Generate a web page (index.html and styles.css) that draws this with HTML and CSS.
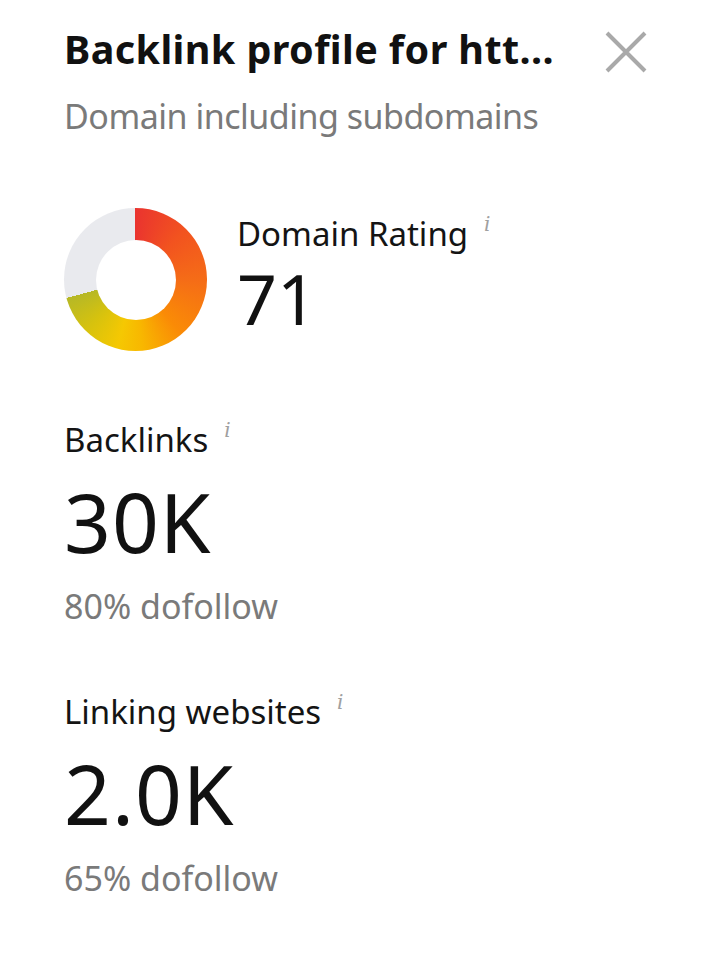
FILE: index.html
```html
<!DOCTYPE html>
<html lang="en">
<head>
<meta charset="utf-8">
<title>Backlink profile</title>
<link rel="stylesheet" href="styles.css">
</head>
<body>
<div class="panel">
  <div class="header">
    <h1 class="title">Backlink profile for htt...</h1>
    <svg class="close" width="42" height="42" viewBox="0 0 42 42" aria-label="Close">
      <path d="M2 2 L40 40 M40 2 L2 40" stroke="#a9a9a9" stroke-width="4" fill="none"/>
    </svg>
  </div>
  <div class="subtitle">Domain including subdomains</div>

  <div class="dr-row">
    <div class="donut"></div>
    <div class="dr-text">
      <div class="label">Domain Rating<span class="info">i</span></div>
      <div class="dr-value">71</div>
    </div>
  </div>

  <div class="metric">
    <div class="label">Backlinks<span class="info">i</span></div>
    <div class="big">30K</div>
    <div class="sub">80% dofollow</div>
  </div>

  <div class="metric">
    <div class="label">Linking websites<span class="info">i</span></div>
    <div class="big">2.0K</div>
    <div class="sub">65% dofollow</div>
  </div>
</div>
</body>
</html>
```

FILE: styles.css
```css
html, body {
  margin: 0;
  padding: 0;
  background: #ffffff;
}

body {
  font-family: "Noto Sans", "Open Sans", sans-serif;
  color: #151515;
}

.panel {
  display: flex;
  flex-direction: column;
  padding: 25px 67px 0 64px;
}

.header {
  display: flex;
  justify-content: space-between;
  align-items: flex-start;
}

.title {
  margin: 0;
  font-size: 39.5px;
  line-height: 48px;
  font-weight: 700;
  color: #111;
  letter-spacing: 0.4px;
}

.close {
  margin-top: 6px;
  margin-right: -1px;
}

.subtitle {
  margin-top: 21px;
  font-size: 34px;
  line-height: 44px;
  font-weight: 400;
  color: #7a7a7a;
  letter-spacing: -0.5px;
}

.dr-row {
  display: flex;
  align-items: flex-start;
  margin-top: 70px;
  gap: 30px;
}

.donut {
  position: relative;
  width: 143px;
  height: 143px;
  border-radius: 50%;
  background: conic-gradient(from 0deg,
    #ea342f 0deg,
    #f2531f 45deg,
    #f56c17 90deg,
    #fa8b06 140deg,
    #f8b800 175deg,
    #f5c802 195deg,
    #d6c20e 225deg,
    #b6b826 255deg,
    #e9eaee 255deg,
    #e9eaee 360deg);
}

.donut::after {
  content: "";
  position: absolute;
  left: 31.5px;
  top: 31.5px;
  width: 80px;
  height: 80px;
  border-radius: 50%;
  background: #fff;
}

.dr-text {
  display: flex;
  flex-direction: column;
  padding-top: 6px;
}

.label {
  font-size: 33px;
  line-height: 40px;
  color: #141414;
}

.info {
  font-family: "DejaVu Serif", "Liberation Serif", serif;
  font-style: italic;
  font-size: 20px;
  color: #a0a0a0;
  margin-left: 16px;
  vertical-align: 15px;
  line-height: 0;
}

.dr-value {
  margin-top: 4px;
  font-size: 70px;
  line-height: 80px;
  color: #111;
}

.metric {
  display: flex;
  flex-direction: column;
  margin-top: 69px;
}

.metric + .metric {
  margin-top: 66px;
}

.big {
  margin-top: 16px;
  font-size: 82px;
  line-height: 90px;
  color: #111;
  letter-spacing: 1px;
}

.sub {
  margin-top: 20px;
  font-size: 34px;
  line-height: 40px;
  color: #7a7a7a;
}
```
